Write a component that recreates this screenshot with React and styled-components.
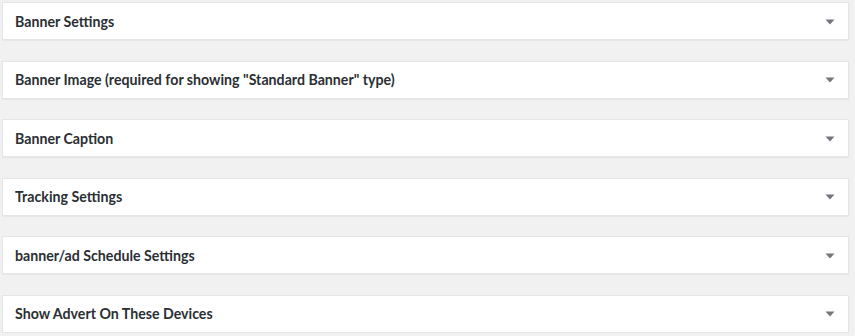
import React from "react"
import styled, { createGlobalStyle } from "styled-components"

const GlobalStyle = createGlobalStyle`
  html, body {
    margin: 0;
    padding: 0;
    background: #f1f1f1;
  }
  body {
    font-family: "Segoe UI", "Lato", "Noto Sans", sans-serif;
    color: #23282d;
  }
`

const Wrapper = styled.div`
  display: flex;
  flex-direction: column;
  gap: 20.5px;
  padding: 2px 6px 0 2px;
`

const Postbox = styled.div`
  display: flex;
  align-items: center;
  justify-content: space-between;
  height: 38px;
  box-sizing: border-box;
  background: #fff;
  border: 1px solid #e5e5e5;
  box-shadow: 0 1px 1px rgba(0, 0, 0, 0.04);
`

const Title = styled.h2`
  margin: 0;
  padding: 1px 12px 0;
  font-size: 14.2px;
  font-weight: 700;
  line-height: 1.4;
  color: #2a2f34;
  white-space: nowrap;
`

const Toggle = styled.span`
  display: flex;
  align-items: center;
  justify-content: center;
  width: 36px;
  height: 36px;
  margin-top: 1px;
`

const Arrow = () => (
  <svg width="10" height="6" viewBox="0 0 10 6">
    <path d="M0.5 0.5 L9.5 0.5 L5 5.5 Z" fill="#72777c" />
  </svg>
)

const boxes = [
  "Banner Settings",
  "Banner Image (required for showing \"Standard Banner\" type)",
  "Banner Caption",
  "Tracking Settings",
  "banner/ad Schedule Settings",
  "Show Advert On These Devices",
]

const App = () => (
  <>
    <GlobalStyle />
    <Wrapper>
      {boxes.map(title => (
        <Postbox key={title}>
          <Title>{title}</Title>
          <Toggle>
            <Arrow />
          </Toggle>
        </Postbox>
      ))}
    </Wrapper>
  </>
)

export default App
